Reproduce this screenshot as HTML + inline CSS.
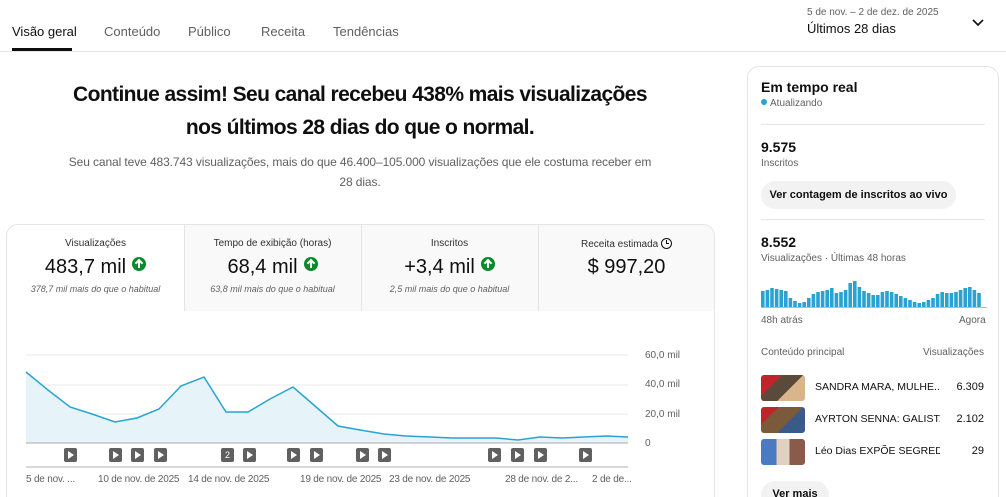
<!DOCTYPE html>
<html><head><meta charset="utf-8"><style>
*{margin:0;padding:0;box-sizing:border-box}
html,body{width:1006px;height:497px;overflow:hidden}
body{background:#fff;font-family:"Liberation Sans",sans-serif;color:#0f0f0f;position:relative}
#w{position:absolute;left:0;top:0;width:1006px;height:497px;overflow:hidden}
.a{position:absolute}
.tab{position:absolute;top:24px;font-size:13px;color:#606060}
.c{text-align:center}
.up{display:inline-block;width:14px;height:14px;border-radius:50%;background:#0b8a2b;vertical-align:2px;margin-left:6px;position:relative}
.up:after{content:"";position:absolute;left:6px;top:3px;width:2px;height:8px;background:#fff}
.up:before{content:"";position:absolute;left:4px;top:3px;width:4px;height:4px;border-left:2px solid #fff;border-top:2px solid #fff;transform:rotate(45deg)}
.pb{position:absolute;top:448px;width:13px;height:14px;background:#606060;border-radius:2px}
.pb:after{content:"";position:absolute;left:4px;top:3px;border-left:6px solid #fff;border-top:4px solid transparent;border-bottom:4px solid transparent}
.xl{position:absolute;top:474px;font-size:10px;color:#606060;letter-spacing:-0.2px}
.yl{position:absolute;left:645px;font-size:10px;color:#606060}
.th{position:absolute;left:761px;width:44px;height:26px;border-radius:3px}
.vt{position:absolute;left:815px;font-size:10.5px;width:125px;white-space:nowrap;overflow:hidden}
.vn{position:absolute;left:930px;width:54px;text-align:right;font-size:11px}
</style></head><body><div id="w">
<div class="tab" style="left:12px;color:#0f0f0f">Visão geral</div>
<div class="a" style="left:12px;top:48px;width:60px;height:3px;background:#0f0f0f"></div>
<div class="tab" style="left:104px">Conteúdo</div>
<div class="tab" style="left:188px">Público</div>
<div class="tab" style="left:261px">Receita</div>
<div class="tab" style="left:333px">Tendências</div>
<div class="a" style="left:0;top:51px;width:1006px;height:1px;background:#e5e5e5"></div>
<div class="a" style="left:807px;top:7px;font-size:10px;color:#606060">5 de nov. – 2 de dez. de 2025</div>
<div class="a" style="left:807px;top:21px;font-size:13px">Últimos 28 dias</div>
<svg class="a" style="left:972px;top:18px" width="12" height="10"><path d="M1 2l5 5 5-5" stroke="#0f0f0f" stroke-width="1.6" fill="none"/></svg>

<div class="a c" style="left:40px;top:78px;width:640px;font-size:21px;font-weight:bold;line-height:33px;letter-spacing:-0.6px">Continue assim! Seu canal recebeu 438% mais visualizações<br>nos últimos 28 dias do que o normal.</div>
<div class="a c" style="left:50px;top:152px;width:620px;font-size:12px;color:#606060;line-height:20px;letter-spacing:-0.1px">Seu canal teve 483.743 visualizações, mais do que 46.400–105.000 visualizações que ele costuma receber em<br>28 dias.</div>

<div class="a" style="left:6px;top:224px;width:709px;height:273px;border:1px solid #e5e5e5;border-bottom:none;border-radius:12px 12px 0 0;overflow:hidden">
 <div class="a" style="left:177px;top:0;width:532px;height:86px;background:#f9f9f9"></div>
 <div class="a" style="left:177px;top:0;width:1px;height:86px;background:#e5e5e5"></div>
 <div class="a" style="left:354px;top:0;width:1px;height:86px;background:#e5e5e5"></div>
 <div class="a" style="left:531px;top:0;width:1px;height:86px;background:#e5e5e5"></div>
</div>
<div class="a c" style="left:7px;top:238px;width:177px;font-size:10px;color:#303030">Visualizações</div>
<div class="a c" style="left:7px;top:256px;width:177px;font-size:20px">483,7 mil<span class="up"></span></div>
<div class="a c" style="left:7px;top:284px;width:177px;font-size:9px;font-style:italic;color:#606060">378,7 mil mais do que o habitual</div>
<div class="a c" style="left:184px;top:238px;width:177px;font-size:10px;color:#303030">Tempo de exibição (horas)</div>
<div class="a c" style="left:184px;top:256px;width:177px;font-size:20px">68,4 mil<span class="up"></span></div>
<div class="a c" style="left:184px;top:284px;width:177px;font-size:9px;font-style:italic;color:#606060">63,8 mil mais do que o habitual</div>
<div class="a c" style="left:361px;top:238px;width:177px;font-size:10px;color:#303030">Inscritos</div>
<div class="a c" style="left:361px;top:256px;width:177px;font-size:20px">+3,4 mil<span class="up"></span></div>
<div class="a c" style="left:361px;top:284px;width:177px;font-size:9px;font-style:italic;color:#606060">2,5 mil mais do que o habitual</div>
<div class="a c" style="left:538px;top:238px;width:177px;font-size:10px;color:#303030">Receita estimada <span style="display:inline-block;width:11px;height:11px;border:1.5px solid #0f0f0f;border-radius:50%;vertical-align:-2px;position:relative"><span style="position:absolute;left:3.5px;top:1px;width:3px;height:4px;border-left:1.3px solid #0f0f0f;border-bottom:1.3px solid #0f0f0f"></span></span></div>
<div class="a c" style="left:538px;top:256px;width:177px;font-size:20px">$ 997,20</div>

<svg class="a" style="left:0;top:340px" width="720" height="130">
 <g stroke="#e8e8e8"><line x1="26" y1="15" x2="628" y2="15"/><line x1="26" y1="45" x2="628" y2="45"/><line x1="26" y1="74" x2="628" y2="74"/></g>
 <path d="M26 32L48 50L70 67L92 74L115 82L137 78L159 69L181 46L204 37L226 72L248 72L270 59L293 47L315 66L338 86L360 90L384 94L406 96L430 97L452 98L474 98L496 98L518 100L540 97L562 98L584 97L606 96L628 97L628 103L26 103Z" fill="#e6f3f9"/>
 <path d="M26 32L48 50L70 67L92 74L115 82L137 78L159 69L181 46L204 37L226 72L248 72L270 59L293 47L315 66L338 86L360 90L384 94L406 96L430 97L452 98L474 98L496 98L518 100L540 97L562 98L584 97L606 96L628 97" fill="none" stroke="#2aa3d1" stroke-width="1.5"/>
 <line x1="26" y1="103" x2="628" y2="103" stroke="#aaa"/>
 <line x1="26" y1="127" x2="628" y2="127" stroke="#ccc" stroke-width="1.5"/>
</svg>
<div class="yl" style="top:350px">60,0 mil</div>
<div class="yl" style="top:379px">40,0 mil</div>
<div class="yl" style="top:409px">20,0 mil</div>
<div class="yl" style="top:438px">0</div>
<div class="pb" style="left:64px"></div><div class="pb" style="left:109px"></div><div class="pb" style="left:131px"></div><div class="pb" style="left:154px"></div>
<div class="a" style="left:221px;top:448px;width:13px;height:14px;background:#606060;border-radius:2px;color:#fff;font-size:9px;text-align:center;line-height:14px">2</div>
<div class="pb" style="left:243px"></div><div class="pb" style="left:287px"></div><div class="pb" style="left:310px"></div><div class="pb" style="left:356px"></div><div class="pb" style="left:378px"></div><div class="pb" style="left:488px"></div><div class="pb" style="left:511px"></div><div class="pb" style="left:534px"></div><div class="pb" style="left:579px"></div>
<div class="xl" style="left:26px">5 de nov. ...</div>
<div class="xl" style="left:98px">10 de nov. de 2025</div>
<div class="xl" style="left:188px">14 de nov. de 2025</div>
<div class="xl" style="left:300px">19 de nov. de 2025</div>
<div class="xl" style="left:389px">23 de nov. de 2025</div>
<div class="xl" style="left:505px">28 de nov. de 2...</div>
<div class="xl" style="left:592px">2 de de...</div>

<div class="a" style="left:747px;top:66px;width:252px;height:431px;border:1px solid #e5e5e5;border-bottom:none;border-radius:12px 12px 0 0"></div>
<div class="a" style="left:761px;top:79px;font-size:14px;font-weight:bold">Em tempo real</div>
<div class="a" style="left:761px;top:98px;font-size:10px;color:#606060"><span style="display:inline-block;width:6px;height:6px;border-radius:50%;background:#2aa3d1;margin-right:3px;vertical-align:1px"></span>Atualizando</div>
<div class="a" style="left:761px;top:124px;width:224px;height:1px;background:#e5e5e5"></div>
<div class="a" style="left:761px;top:139px;font-size:14px;font-weight:bold">9.575</div>
<div class="a" style="left:761px;top:158px;font-size:10px;color:#606060">Inscritos</div>
<div class="a" style="left:761px;top:181px;width:195px;height:28px;border-radius:14px;background:#f2f2f2;font-size:11px;font-weight:bold;line-height:28px;text-align:center">Ver contagem de inscritos ao vivo</div>
<div class="a" style="left:761px;top:219px;width:224px;height:1px;background:#e5e5e5"></div>
<div class="a" style="left:761px;top:234px;font-size:14px;font-weight:bold">8.552</div>
<div class="a" style="left:761px;top:253px;font-size:10px;color:#606060">Visualizações · Últimas 48 horas</div>
<svg class="a" style="left:761px;top:278px" width="226" height="32" id="bars"></svg>
<div class="a" style="left:761px;top:315px;font-size:10px;color:#606060">48h atrás</div>
<div class="a" style="left:959px;top:315px;font-size:10px;color:#606060">Agora</div>
<div class="a" style="left:761px;top:347px;font-size:10px;color:#606060">Conteúdo principal</div>
<div class="a" style="left:923px;top:347px;font-size:10px;color:#606060">Visualizações</div>
<div class="th" style="top:375px;background:linear-gradient(135deg,#c0242a 0 30%,#5a4a3a 30% 60%,#d9b58c 60%)"></div>
<div class="th" style="top:407px;background:linear-gradient(135deg,#c0242a 0 25%,#7a5a3a 25% 60%,#3a5a8a 60%)"></div>
<div class="th" style="top:439px;background:linear-gradient(90deg,#4a7ac0 0 35%,#e0d0c0 35% 65%,#8a5a4a 65%)"></div>
<div class="vt" style="top:381px">SANDRA MARA, MULHE...</div>
<div class="vn" style="top:381px">6.309</div>
<div class="vt" style="top:413px">AYRTON SENNA: GALIST...</div>
<div class="vn" style="top:413px">2.102</div>
<div class="vt" style="top:445px">Léo Dias EXPÕE SEGREDO d...</div>
<div class="vn" style="top:445px">29</div>
<div class="a" style="left:761px;top:481px;width:68px;height:16px;border-radius:14px 14px 0 0;background:#f2f2f2;font-size:11px;font-weight:bold;line-height:26px;text-align:center;overflow:hidden">Ver mais</div>
</div>
<script>
var h=[16,17,19,18,17,16,9,6,4,5,9,13,15,16,17,19,14,15,17,24,26,20,16,14,12,12,15,16,15,13,11,9,7,5,4,5,7,9,13,15,14,14,15,17,19,20,17,14,12,12];
var s='';for(var i=0;i<48;i++){s+='<rect x="'+(i*4.6)+'" y="'+(29-h[i])+'" width="3.6" height="'+h[i]+'" fill="#2aa3d1"/>';}
s+='<line x1="0" y1="29.5" x2="226" y2="29.5" stroke="#bbb"/>';
document.getElementById('bars').innerHTML=s;
</script>
</body></html>
